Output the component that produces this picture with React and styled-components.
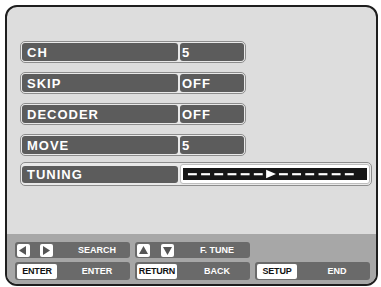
import React from "react";
import styled, { createGlobalStyle } from "styled-components";

const Global = createGlobalStyle`
  html, body { margin: 0; padding: 0; background: #ffffff; }
  body { font-family: "Liberation Sans", Arial, sans-serif; }
`;

const Frame = styled.div`
  box-sizing: border-box;
  margin: 5px 0 0 5px;
  width: 373px;
  height: 281px;
  border: 2px solid #1e1e1e;
  border-radius: 12px;
  background: #dddddd;
  overflow: hidden;
  display: flex;
  flex-direction: column;
`;

const Menu = styled.div`
  flex: 1;
  display: flex;
  flex-direction: column;
  padding: 34px 0 0 13px;
`;

const Row = styled.div`
  box-sizing: border-box;
  display: flex;
  align-items: center;
  gap: 2px;
  width: ${(p) => p.$w}px;
  height: ${(p) => p.$h}px;
  margin-top: ${(p) => p.$mt}px;
  padding: 1px;
  border: 1px solid #8c8c8c;
  border-radius: 5px;
  background: #e9e9e9;
`;

const Cell = styled.div`
  box-sizing: border-box;
  display: flex;
  align-items: center;
  height: ${(p) => p.$h || 18}px;
  width: ${(p) => (p.$w ? p.$w + "px" : "auto")};
  flex: ${(p) => (p.$w ? "none" : 1)};
  padding-left: ${(p) => p.$pl}px;
  background: #5c5c5c;
  border-radius: 3px;
  color: #ffffff;
  font-weight: bold;
  font-size: 13px;
  letter-spacing: 1px;
  white-space: nowrap;
`;

const TuneBox = styled.div`
  box-sizing: border-box;
  flex: 1;
  height: 20px;
  padding: 3px 2px;
  background: #ffffff;
  border: 1px solid #bdbdbd;
  border-radius: 3px;
  display: flex;
`;

const TuneBar = styled.svg`
  display: block;
  width: 100%;
  height: 100%;
  background: #161616;
`;

const Bottom = styled.div`
  height: 50px;
  box-sizing: border-box;
  background: #a7a7a7;
  padding: 8px 0 0 8px;
  display: flex;
  flex-direction: column;
  gap: 4px;
`;

const BtnRow = styled.div`
  display: flex;
  gap: 5px;
  height: ${(p) => p.$h}px;
`;

const Group = styled.div`
  box-sizing: border-box;
  width: 115px;
  height: 100%;
  background: #6a6a6a;
  border-radius: 3px;
  display: flex;
  align-items: center;
  padding-left: 2px;
`;

const Keys = styled.div`
  width: 47px;
  display: flex;
  align-items: center;
  gap: ${(p) => p.$gap || 0}px;
`;

const Key = styled.div`
  box-sizing: border-box;
  height: ${(p) => p.$h}px;
  width: ${(p) => p.$w}px;
  background: #ffffff;
  border-radius: 2px;
  display: flex;
  align-items: center;
  justify-content: center;
  color: #111111;
  font-weight: bold;
  font-size: 9px;
  letter-spacing: -0.2px;
`;

const Label = styled.div`
  flex: 1;
  text-align: center;
  color: #ffffff;
  font-weight: bold;
  font-size: 9px;
`;

const Tri = ({ dir }) => {
  const pts = {
    left: "9,2 9,11 2,6.5",
    right: "3,2 3,11 10,6.5",
    up: "6.5,2 11,10 2,10",
    down: "2,3 11,3 6.5,11",
  }[dir];
  return (
    <svg width="13" height="13" viewBox="0 0 13 13">
      <polygon points={pts} fill="#555555" />
    </svg>
  );
};

const rows = [
  { label: "CH", value: "5" },
  { label: "SKIP", value: "OFF" },
  { label: "DECODER", value: "OFF" },
  { label: "MOVE", value: "5" },
];

const dashStartsL = [5, 18.3, 31.6, 45, 58.3, 71.6];
const dashStartsR = [97, 110.3, 123.6, 137, 150.3, 163.6];

export default function App() {
  return (
    <>
      <Global />
      <Frame>
        <Menu>
          {rows.map((r, i) => (
            <Row key={r.label} $w={226} $h={22} $mt={i === 0 ? 0 : 9}>
              <Cell $w={156} $pl={5}>{r.label}</Cell>
              <Cell $pl={2}>{r.value}</Cell>
            </Row>
          ))}
          <Row $w={352} $h={24} $mt={6}>
            <Cell $w={156} $h={17} $pl={5}>TUNING</Cell>
            <TuneBox>
              <TuneBar viewBox="0 0 186 14" preserveAspectRatio="none">
                {dashStartsL.concat(dashStartsR).map((x) => (
                  <rect key={x} x={x} y={6} width={9} height={2.5} fill="#ffffff" />
                ))}
                <polygon points="84,2 94,7 84,12" fill="#ffffff" />
              </TuneBar>
            </TuneBox>
          </Row>
        </Menu>
        <Bottom>
          <BtnRow $h={16}>
            <Group>
              <Keys $gap={10}>
                <Key $w={13} $h={13}><Tri dir="left" /></Key>
                <Key $w={13} $h={13}><Tri dir="right" /></Key>
              </Keys>
              <Label>SEARCH</Label>
            </Group>
            <Group>
              <Keys $gap={11}>
                <Key $w={13} $h={13}><Tri dir="up" /></Key>
                <Key $w={13} $h={13}><Tri dir="down" /></Key>
              </Keys>
              <Label>F. TUNE</Label>
            </Group>
          </BtnRow>
          <BtnRow $h={18}>
            <Group>
              <Keys>
                <Key $w={40} $h={15}>ENTER</Key>
              </Keys>
              <Label>ENTER</Label>
            </Group>
            <Group>
              <Keys>
                <Key $w={40} $h={15}>RETURN</Key>
              </Keys>
              <Label>BACK</Label>
            </Group>
            <Group>
              <Keys>
                <Key $w={40} $h={15}>SETUP</Key>
              </Keys>
              <Label>END</Label>
            </Group>
          </BtnRow>
        </Bottom>
      </Frame>
    </>
  );
}
